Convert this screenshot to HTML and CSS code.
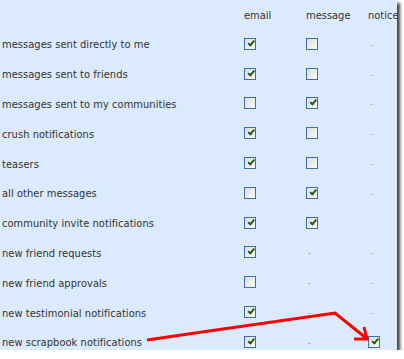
FILE: index.html
```html
<!DOCTYPE html>
<html lang="en">
<head>
  <meta charset="UTF-8" />
  <title>Notification settings</title>
  <link rel="stylesheet" href="styles.css">
</head>
<body>
  <div class="panel">
    <div class="grid">
      <div></div>
      <div class="head">email</div>
      <div class="head">message</div>
      <div class="head">notice</div>

      <div class="label">messages sent directly to me</div>
      <div><span class="box on"></span></div>
      <div><span class="box"></span></div>
      <div><span class="dash">-</span></div>

      <div class="label">messages sent to friends</div>
      <div><span class="box on"></span></div>
      <div><span class="box"></span></div>
      <div><span class="dash">-</span></div>

      <div class="label">messages sent to my communities</div>
      <div><span class="box"></span></div>
      <div><span class="box on"></span></div>
      <div><span class="dash">-</span></div>

      <div class="label">crush notifications</div>
      <div><span class="box on"></span></div>
      <div><span class="box"></span></div>
      <div><span class="dash">-</span></div>

      <div class="label">teasers</div>
      <div><span class="box on"></span></div>
      <div><span class="box"></span></div>
      <div><span class="dash">-</span></div>

      <div class="label">all other messages</div>
      <div><span class="box"></span></div>
      <div><span class="box on"></span></div>
      <div><span class="dash">-</span></div>

      <div class="label">community invite notifications</div>
      <div><span class="box on"></span></div>
      <div><span class="box on"></span></div>
      <div></div>

      <div class="label">new friend requests</div>
      <div><span class="box on"></span></div>
      <div><span class="dash">-</span></div>
      <div><span class="dash">-</span></div>

      <div class="label">new friend approvals</div>
      <div><span class="box"></span></div>
      <div><span class="dash">-</span></div>
      <div><span class="dash">-</span></div>

      <div class="label">new testimonial notifications</div>
      <div><span class="box on"></span></div>
      <div><span class="dash">-</span></div>
      <div><span class="dash">-</span></div>

      <div class="label">new scrapbook notifications</div>
      <div><span class="box on"></span></div>
      <div><span class="dash">-</span></div>
      <div><span class="box on"></span></div>
    </div>

    <!-- red annotation arrow drawn over the table -->
    <svg class="arrow" width="397" height="350" viewBox="0 0 397 350">
      <polyline points="147,340 202,332 335,313 366,338" fill="none" stroke="#ff0000" stroke-width="3" />
      <polyline points="354,339 367,339 364,327" fill="none" stroke="#ff0000" stroke-width="3" />
    </svg>
  </div>
</body>
</html>
```

FILE: styles.css
```css
body {
  margin: 0;
  background: #fff;
  font-family: "DejaVu Sans Condensed", "DejaVu Sans", sans-serif;
  font-size: 11px;
  color: #333;
}
.panel {
  position: relative;
  width: 397px;
  height: 350px;
  background: #dbeafc;
  overflow: hidden;
  box-shadow: 3px 3px 3px rgba(0, 0, 0, 0.75);
}
.grid {
  display: grid;
  grid-template-columns: 244px 62px 62px 1fr;
  grid-template-rows: 30px;
  grid-auto-rows: 29.8px;
  align-items: center;
}
.grid > div {
  display: flex;
  align-items: center;
  height: 100%;
}
.label {
  padding-left: 2px;
  letter-spacing: 0.05px;
}
.head {
  white-space: nowrap;
}
.box {
  display: inline-block;
  width: 10px;
  height: 10px;
  border: 1px solid #3f6f9e;
  background: linear-gradient(135deg, #dcdcd6, #fbfbfa);
  position: relative;
  margin-top: -2px;
}
.box.on::after {
  content: "";
  position: absolute;
  left: 2px;
  top: 1px;
  width: 5px;
  height: 2px;
  border-left: 2px solid #1d5e1d;
  border-bottom: 2px solid #1d5e1d;
  transform: rotate(-50deg) translate(0, 1px);
}
.dash {
  color: #999;
  font-size: 9px;
  padding-left: 2px;
}
.arrow {
  position: absolute;
  left: 0;
  top: 0;
  pointer-events: none;
}
```
